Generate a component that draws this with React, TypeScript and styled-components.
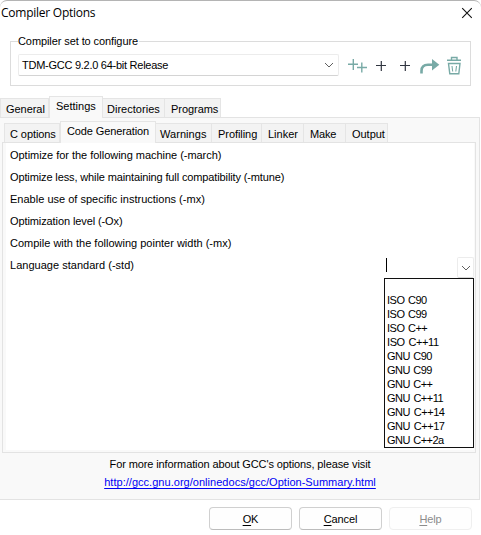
import React from 'react';
import styled, { createGlobalStyle } from 'styled-components';

const GlobalStyle = createGlobalStyle`
  *, *::before, *::after { box-sizing: border-box; }
  body { margin: 0; background: #fff; }
`;

const Dialog = styled.div`
  width: 481px;
  height: 535px;
  overflow: hidden;
  display: flex;
  flex-direction: column;
  background: #fff;
  border-top: 1px solid #b4b4b4;
  border-radius: 7px 7px 0 0;
  color: #000;
  font: 11px/14px "Liberation Sans", Arial, sans-serif;
`;

const Label = styled.span<{ $spacing?: number }>`
  white-space: pre;
  letter-spacing: ${(p) => p.$spacing ?? 0}px;
`;

const TitleBar = styled.header`
  display: flex;
  justify-content: space-between;
  height: 33px;
  padding: 0 8px 0 1px;
`;

const Title = styled.h1`
  margin: 0;
  font: 400 12px/24px "Open Sans", "Noto Sans", sans-serif;
  letter-spacing: -0.25px;
`;

const CloseIcon = styled.svg`
  margin-top: 6px;
`;

const CompilerSet = styled.fieldset`
  display: flex;
  align-items: center;
  height: 52px;
  margin: 0 10px 0 10px;
  padding: 0 8px 0 7px;
  border: 1px solid #dcdcdc;
  min-width: 0;
`;

const Legend = styled.legend`
  padding: 0 1px 0 0;
  line-height: 14px;
`;

const SetRow = styled.div`
  display: flex;
  align-items: center;
  height: 22px;
  margin-top: 6px;
`;

const ComboBox = styled.div`
  display: flex;
  align-items: center;
  justify-content: space-between;
  width: 321px;
  height: 22px;
  padding: 0 4px 0 3px;
  border: 1px solid #ececec;
  border-bottom-color: #d4d4d4;
  border-radius: 2px;
`;

const ToolIcons = styled.svg`
  flex: none;
  margin-left: 7px;
`;

const TabStrip = styled.nav<{ $indent: number }>`
  display: flex;
  align-items: flex-end;
  height: 22px;
  padding-left: ${(p) => p.$indent}px;
`;

const Tab = styled.div<{ $width: number; $active?: boolean; $pad?: number }>`
  position: relative;
  z-index: ${(p) => (p.$active ? 1 : 0)};
  width: ${(p) => p.$width}px;
  height: ${(p) => (p.$active ? 22 : 19)}px;
  margin-bottom: ${(p) => (p.$active ? -1 : 0)}px;
  padding: ${(p) => (p.$active ? 2 : 3)}px 0 0 ${(p) => p.$pad ?? 5}px;
  border: 1px solid #e5e5e5;
  border-bottom: 0;
  border-left-width: ${(p) => (p.$active ? 1 : 0)}px;
  background: ${(p) => (p.$active ? '#f9f9f9' : '#f3f3f3')};

  &:first-child { border-left-width: 1px; }
`;

const OuterTabs = styled.div`
  margin-top: 9px;
`;

const OuterPanel = styled.section`
  width: 480px;
  height: 383px;
  padding: 2px 3px 0 2px;
  border: 1px solid #e3e3e3;
  border-left: 0;
  background: #f9f9f9;
`;

const InnerPanel = styled.div`
  width: 474px;
  height: 311px;
  padding: 0 1px 2px 3px;
  border: 1px solid #e3e3e3;
  background: #f9f9f9;
`;

const OptionList = styled.div`
  height: 307px;
  padding: 1px 0 0 4px;
  background: #fff;
`;

const OptionRow = styled.div`
  position: relative;
  display: flex;
  height: 22px;
  line-height: 22px;
`;

const StandardEditor = styled.div`
  display: flex;
  justify-content: space-between;
  width: 88px;
  height: 20px;
  margin: 3px 0 0 auto;
`;

const Caret = styled.i`
  width: 1px;
  height: 14px;
  margin-top: 1px;
  background: #000;
`;

const DropButton = styled.div`
  display: flex;
  align-items: center;
  justify-content: center;
  width: 17px;
  height: 21px;
  border: 1px solid #ececec;
  border-bottom-color: #d8d8d8;
  border-radius: 2px;
`;

const StandardMenu = styled.ul`
  position: absolute;
  top: 24px;
  right: 0;
  width: 90px;
  height: 170px;
  margin: 0;
  padding: 0 0 0 2px;
  border: 1px solid #101010;
  background: #fff;
  list-style: none;
  line-height: 14px;
  word-spacing: 1px;
`;

const StandardItem = styled.li`
  height: 14px;
`;

const PanelFooter = styled.footer`
  display: flex;
  flex-direction: column;
  align-items: center;
  padding: 2px 0 0 2px;
  line-height: 18px;
`;

const Link = styled.a`
  color: #0000f5;
  text-decoration: underline;
  text-underline-offset: 2px;
  text-decoration-thickness: 1px;
  text-decoration-skip-ink: none;
  letter-spacing: 0.03px;
`;

const Actions = styled.div`
  display: flex;
  justify-content: flex-end;
  gap: 7px;
  margin-top: 7px;
  padding-right: 9px;
`;

const Button = styled.button`
  width: 83px;
  height: 23px;
  padding: 0;
  border: 1px solid #d0d0d0;
  border-bottom-color: #bcbcbc;
  border-radius: 4px;
  background: #fefefe;
  color: #000;
  font: inherit;
  letter-spacing: -0.1px;

  &:disabled {
    border-color: #efefef;
    color: #8c8c8c;
  }
`;

const Mnemonic = styled.span`
  text-decoration: underline;
  text-underline-offset: 2px;
  text-decoration-thickness: 1px;
`;

const Chevron = () => (
  <svg width="10" height="6" viewBox="0 0 10 6" fill="none" stroke="#606060">
    <path d="M1 1l4 4 4-4" />
  </svg>
);

type TabDef = { text: string; width: number; spacing: number; pad?: number; active?: boolean };

const outerTabs: TabDef[] = [
  { text: 'General', width: 49, spacing: -0.05, pad: 5 },
  { text: 'Settings', width: 54, spacing: 0, pad: 6, active: true },
  { text: 'Directories', width: 62, spacing: 0.02, pad: 4 },
  { text: 'Programs', width: 56, spacing: -0.05, pad: 6 },
];

const innerTabs: TabDef[] = [
  { text: 'C options', width: 56, spacing: -0.08, pad: 5 },
  { text: 'Code Generation', width: 96, spacing: -0.12, pad: 6, active: true },
  { text: 'Warnings', width: 56, spacing: 0.05, pad: 4 },
  { text: 'Profiling', width: 50, spacing: -0.06, pad: 6 },
  { text: 'Linker', width: 42, spacing: 0, pad: 6 },
  { text: 'Make', width: 42, spacing: -0.2, pad: 6 },
  { text: 'Output', width: 42, spacing: -0.03, pad: 6 },
];

const options = [
  { text: 'Optimize for the following machine (-march)', spacing: -0.03 },
  { text: 'Optimize less, while maintaining full compatibility (-mtune)', spacing: -0.125 },
  { text: 'Enable use of specific instructions (-mx)', spacing: 0.01 },
  { text: 'Optimization level (-Ox)', spacing: -0.1 },
  { text: 'Compile with the following pointer width (-mx)', spacing: 0 },
];

const standards = [
  { text: '', spacing: 0 },
  { text: 'ISO C90', spacing: -0.5 },
  { text: 'ISO C99', spacing: -0.5 },
  { text: 'ISO C++', spacing: -0.5 },
  { text: 'ISO C++11', spacing: -0.4 },
  { text: 'GNU C90', spacing: -0.56 },
  { text: 'GNU C99', spacing: -0.56 },
  { text: 'GNU C++', spacing: -0.56 },
  { text: 'GNU C++11', spacing: -0.52 },
  { text: 'GNU C++14', spacing: -0.45 },
  { text: 'GNU C++17', spacing: -0.45 },
  { text: 'GNU C++2a', spacing: -0.55 },
];

const Tabs = ({ items, indent }: { items: TabDef[]; indent: number }) => (
  <TabStrip $indent={indent}>
    {items.map((t) => (
      <Tab key={t.text} $width={t.width} $active={t.active} $pad={t.pad}>
        <Label $spacing={t.spacing}>{t.text}</Label>
      </Tab>
    ))}
  </TabStrip>
);

export default function App() {
  return (
    <>
      <GlobalStyle />
      <Dialog>
        <TitleBar>
          <Title>Compiler Options</Title>
          <CloseIcon width="12" height="12" viewBox="0 0 12 12" stroke="#111" strokeWidth="1.1">
            <path d="M1.2 1.2l9.6 9.6M10.8 1.2l-9.6 9.6" />
          </CloseIcon>
        </TitleBar>
        <CompilerSet>
          <Legend>
            <Label $spacing={-0.09}>Compiler set to configure</Label>
          </Legend>
          <SetRow>
            <ComboBox>
              <Label $spacing={-0.26}>TDM-GCC 9.2.0 64-bit Release</Label>
              <Chevron />
            </ComboBox>
            <ToolIcons width="118" height="24" viewBox="346 53 118 24" fill="none">
              <g stroke="#78aaa6" strokeWidth="1.4">
                <path d="M348 64.3h10M353.3 59v11M357 67.5h10M361.8 62.5v10" />
              </g>
              <path d="M376 65.5h10M381.3 61v10M400 65.5h10M405.3 61v10" stroke="#303540" strokeWidth="1.2" />
              <path d="M421.500 73.500V71Q421.500 64.800 428 64.800H433" stroke="#78aaa6" strokeWidth="2.6" />
              <path d="M432 59l7.300 5.800-7.300 5.800z" fill="#78aaa6" />
              <g stroke="#78aaa6" strokeWidth="1.4">
                <path d="M447 60.300h14M451.500 60v-2.500h5.500v2.500M448.500 63.500h11.500l-1.200 10.300h-9z" />
                <path d="M452 66l.7 5.500M456.500 66l-.7 5.500" strokeWidth="1.1" />
              </g>
            </ToolIcons>
          </SetRow>
        </CompilerSet>
        <OuterTabs>
          <Tabs items={outerTabs} indent={0} />
        </OuterTabs>
        <OuterPanel>
          <Tabs items={innerTabs} indent={2} />
          <InnerPanel>
            <OptionList>
              {options.map((o) => (
                <OptionRow key={o.text}>
                  <Label $spacing={o.spacing}>{o.text}</Label>
                </OptionRow>
              ))}
              <OptionRow>
                <Label $spacing={0.02}>Language standard (-std)</Label>
                <StandardEditor>
                  <Caret />
                  <DropButton>
                    <Chevron />
                  </DropButton>
                </StandardEditor>
                <StandardMenu>
                  {standards.map((s, i) => (
                    <StandardItem key={i}>
                      <Label $spacing={s.spacing}>{s.text}</Label>
                    </StandardItem>
                  ))}
                </StandardMenu>
              </OptionRow>
            </OptionList>
          </InnerPanel>
          <PanelFooter>
            <Label $spacing={-0.11}>For more information about GCC's options, please visit</Label>
            <Link>http://gcc.gnu.org/onlinedocs/gcc/Option-Summary.html</Link>
          </PanelFooter>
        </OuterPanel>
        <Actions>
          <Button>
            <Mnemonic>O</Mnemonic>K
          </Button>
          <Button>
            <Mnemonic>C</Mnemonic>ancel
          </Button>
          <Button disabled>
            <Mnemonic>H</Mnemonic>elp
          </Button>
        </Actions>
      </Dialog>
    </>
  );
}
